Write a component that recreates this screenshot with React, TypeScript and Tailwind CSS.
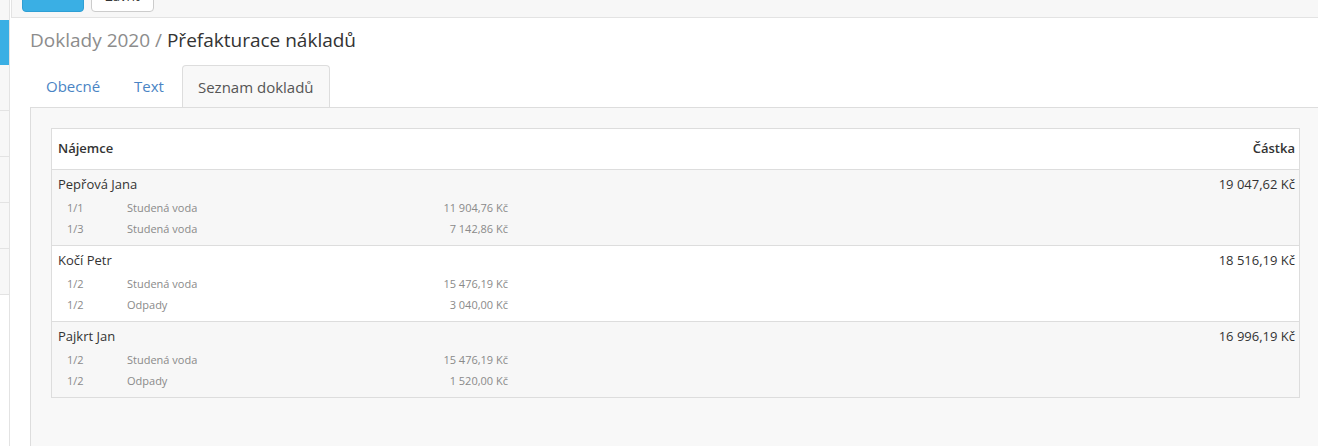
import React from "react";

type Item = { share: string; label: string; amount: string };
type Group = { name: string; total: string; items: Item[] };

const groups: Group[] = [
  {
    name: "Pepřová Jana",
    total: "19 047,62 Kč",
    items: [
      { share: "1/1", label: "Studená voda", amount: "11 904,76 Kč" },
      { share: "1/3", label: "Studená voda", amount: "7 142,86 Kč" },
    ],
  },
  {
    name: "Kočí Petr",
    total: "18 516,19 Kč",
    items: [
      { share: "1/2", label: "Studená voda", amount: "15 476,19 Kč" },
      { share: "1/2", label: "Odpady", amount: "3 040,00 Kč" },
    ],
  },
  {
    name: "Pajkrt Jan",
    total: "16 996,19 Kč",
    items: [
      { share: "1/2", label: "Studená voda", amount: "15 476,19 Kč" },
      { share: "1/2", label: "Odpady", amount: "1 520,00 Kč" },
    ],
  },
];

export default function App() {
  return (
    <div
      className="flex h-[446px] w-[1318px] overflow-hidden bg-white text-[#333]"
      style={{ fontFamily: '"Open Sans", "Liberation Sans", sans-serif' }}
    >
      {/* Sidebar strip */}
      <div className="flex w-[10px] shrink-0 flex-col border-r border-[#e3e3e3]">
        <div className="h-[20px] bg-[#f7f7f7]" />
        <div className="h-[45px] bg-[#3aafe4]" />
        {[0, 1, 2, 3, 4].map((i) => (
          <div key={i} className="h-[46px] border-b border-[#e3e3e3] bg-[#f7f7f7]" />
        ))}
      </div>

      <div className="flex min-w-0 flex-1 flex-col">
        {/* Toolbar */}
        <div className="ml-[1px] flex h-[18px] items-end gap-[7px] overflow-hidden border-b border-l border-[#e3e3e3] bg-[#f7f7f7] pb-[5px] pl-[10px]">
          <div className="h-[30px] w-[62px] shrink-0 rounded-[4px] border border-[#2f9fd4] bg-[#3aafe4]" />
          <div className="flex h-[30px] w-[63px] shrink-0 items-center justify-center rounded-[4px] border border-[#ccc] bg-white text-[13px] text-[#333]">
            Zavřít
          </div>
        </div>

        {/* Content */}
        <div className="flex flex-1 flex-col pl-[20px]">
          <h1 className="mt-[8px] h-[28px] text-[19px] leading-[28px]">
            <span className="text-[#8c8c8c]">Doklady 2020 / </span>
            <span className="text-[#333]">Přefakturace nákladů</span>
          </h1>

          <div className="mt-[11px] flex gap-[2px] text-[15px] leading-[20px]">
            <div className="px-[16px] py-[11px] text-[#4a84c4]">Obecné</div>
            <div className="px-[16px] py-[11px] text-[#4a84c4]">Text</div>
            <div className="-mb-[1px] rounded-t-[4px] border border-b-0 border-[#ddd] bg-[#f8f8f8] px-[15px] py-[11px] text-[#555]">
              Seznam dokladů
            </div>
          </div>

          <div className="flex-1 border-l border-t border-[#ddd] bg-[#f8f8f8] pl-[20px] pr-[18px] pt-[20px]">
            <div className="border border-[#ddd] bg-white text-[13px]">
              <div className="flex h-[40px] items-center justify-between pl-[6px] pr-[4px] font-semibold">
                <span>Nájemce</span>
                <span>Částka</span>
              </div>
              {groups.map((g, gi) => (
                <div
                  key={g.name}
                  className={`border-t border-[#ddd] pb-[5px] pt-[5px] ${gi % 2 === 0 ? "bg-[#f7f7f7]" : "bg-white"}`}
                >
                  <div className="flex h-[20px] items-center justify-between pl-[6px] pr-[4px] text-[13px]">
                    <span>{g.name}</span>
                    <span>{g.total}</span>
                  </div>
                  <div className="mt-[3px]">
                    {g.items.map((it, ii) => (
                      <div
                        key={ii}
                        className="flex h-[21px] w-[456px] items-center pl-[15px] text-[11px] text-[#8a8a8a]"
                      >
                        <span className="w-[60px]">{it.share}</span>
                        <span className="flex-1">{it.label}</span>
                        <span>{it.amount}</span>
                      </div>
                    ))}
                  </div>
                </div>
              ))}
            </div>
          </div>
        </div>
      </div>
    </div>
  );
}
